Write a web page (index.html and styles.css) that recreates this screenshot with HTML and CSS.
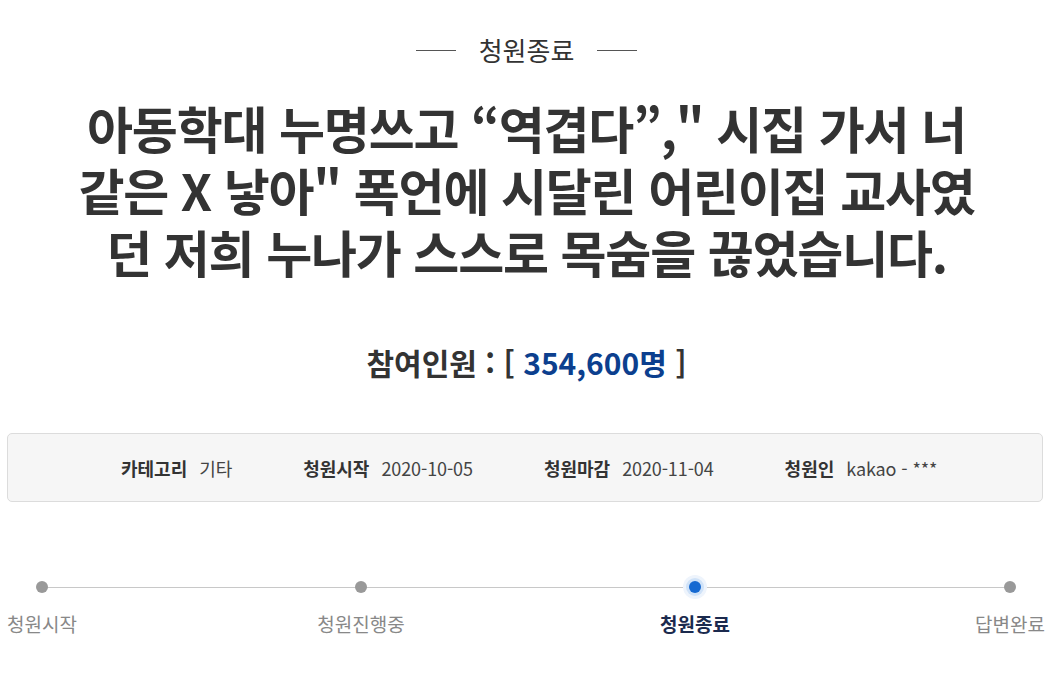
FILE: index.html
```html
<!DOCTYPE html>
<html lang="ko">
<head>
<meta charset="utf-8">
<link rel="stylesheet" href="styles.css">
</head>
<body>
<div class="page">
  <div class="status"><span class="status-line"></span><span class="status-text">청원종료</span><span class="status-line"></span></div>
  <h1 class="title">아동학대 누명쓰고 “역겹다”," 시집 가서 너<br>같은 X 낳아" 폭언에 시달린 어린이집 교사였<br>던 저희 누나가 스스로 목숨을 끊었습니다.</h1>
  <div class="count">참여인원 : [ <span class="num">354,600명</span> ]</div>
  <div class="info">
    <div class="info-item"><span class="info-key">카테고리</span><span class="info-val">기타</span></div>
    <div class="info-item"><span class="info-key">청원시작</span><span class="info-val">2020-10-05</span></div>
    <div class="info-item"><span class="info-key">청원마감</span><span class="info-val">2020-11-04</span></div>
    <div class="info-item"><span class="info-key">청원인</span><span class="info-val">kakao - ***</span></div>
  </div>
  <div class="progress">
    <div class="track"></div>
    <div class="steps">
      <div class="step s1"><span class="dot"></span><span class="label">청원시작</span></div>
      <div class="step s2"><span class="dot"></span><span class="label">청원진행중</span></div>
      <div class="step s3 active"><span class="dot"></span><span class="label">청원종료</span></div>
      <div class="step s4"><span class="dot"></span><span class="label">답변완료</span></div>
    </div>
  </div>
</div>
</body>
</html>
```
FILE: styles.css
```css
html, body {
  margin: 0;
  padding: 0;
  background: #fff;
}
body {
  font-family: "Noto Sans CJK KR", "Noto Sans", sans-serif;
  color: #333;
}
.page {
  padding: 0 8px;
}
.status {
  display: flex;
  justify-content: center;
  align-items: center;
  padding-top: 32px;
  height: 36px;
}
.status-text {
  font-size: 26px;
  line-height: 36px;
  color: #333;
  margin: 0 23px;
}
.status-line {
  display: block;
  width: 40px;
  height: 1px;
  background: #555;
}
.title {
  margin: 28px 0 0 0;
  text-align: center;
  font-size: 50px;
  line-height: 62px;
  font-weight: 700;
  color: #333;
  letter-spacing: -1.2px;
}
.count {
  margin-top: 60px;
  text-align: center;
  font-size: 30px;
  line-height: 40px;
  font-weight: 700;
  color: #333;
}
.count .num {
  color: #0c3f8e;
}
.info {
  margin: 51px 2px 0 -1px;
  height: 67px;
  border: 1px solid #dcdcdc;
  border-radius: 5px;
  background: #f6f6f6;
  display: flex;
  align-items: center;
  padding-left: 113px;
}
.info-item {
  display: flex;
  align-items: center;
  font-size: 18px;
  margin-right: 71px;
}
.info-key {
  font-weight: 700;
  color: #333;
  margin-right: 12px;
}
.info-val {
  color: #444;
  letter-spacing: -0.1px;
}
.progress {
  position: relative;
  margin-top: 79px;
}
.track {
  position: absolute;
  left: 32px;
  right: 36px;
  top: 6px;
  height: 1px;
  background: #c8c8c8;
}
.steps {
  position: relative;
  display: flex;
}
.step {
  display: flex;
  flex-direction: column;
  align-items: center;
  flex: none;
}
.s1 { width: 68px; }
.s2 { width: 86px; margin-left: 242px; }
.s3 { width: 70px; margin-left: 256px; }
.s4 { width: 70px; margin-left: 245px; }
.dot {
  width: 12px;
  height: 12px;
  border-radius: 50%;
  background: #999;
  margin-bottom: 18px;
}
.label {
  font-size: 19px;
  line-height: 26px;
  color: #888;
  white-space: nowrap;
}
.active .dot {
  background: #1569d1;
  box-shadow: 0 0 0 3px #cfe2f8, 0 0 0 6px #eef4fc;
}
.active .label {
  color: #1b2a4e;
  font-weight: 700;
}
```
